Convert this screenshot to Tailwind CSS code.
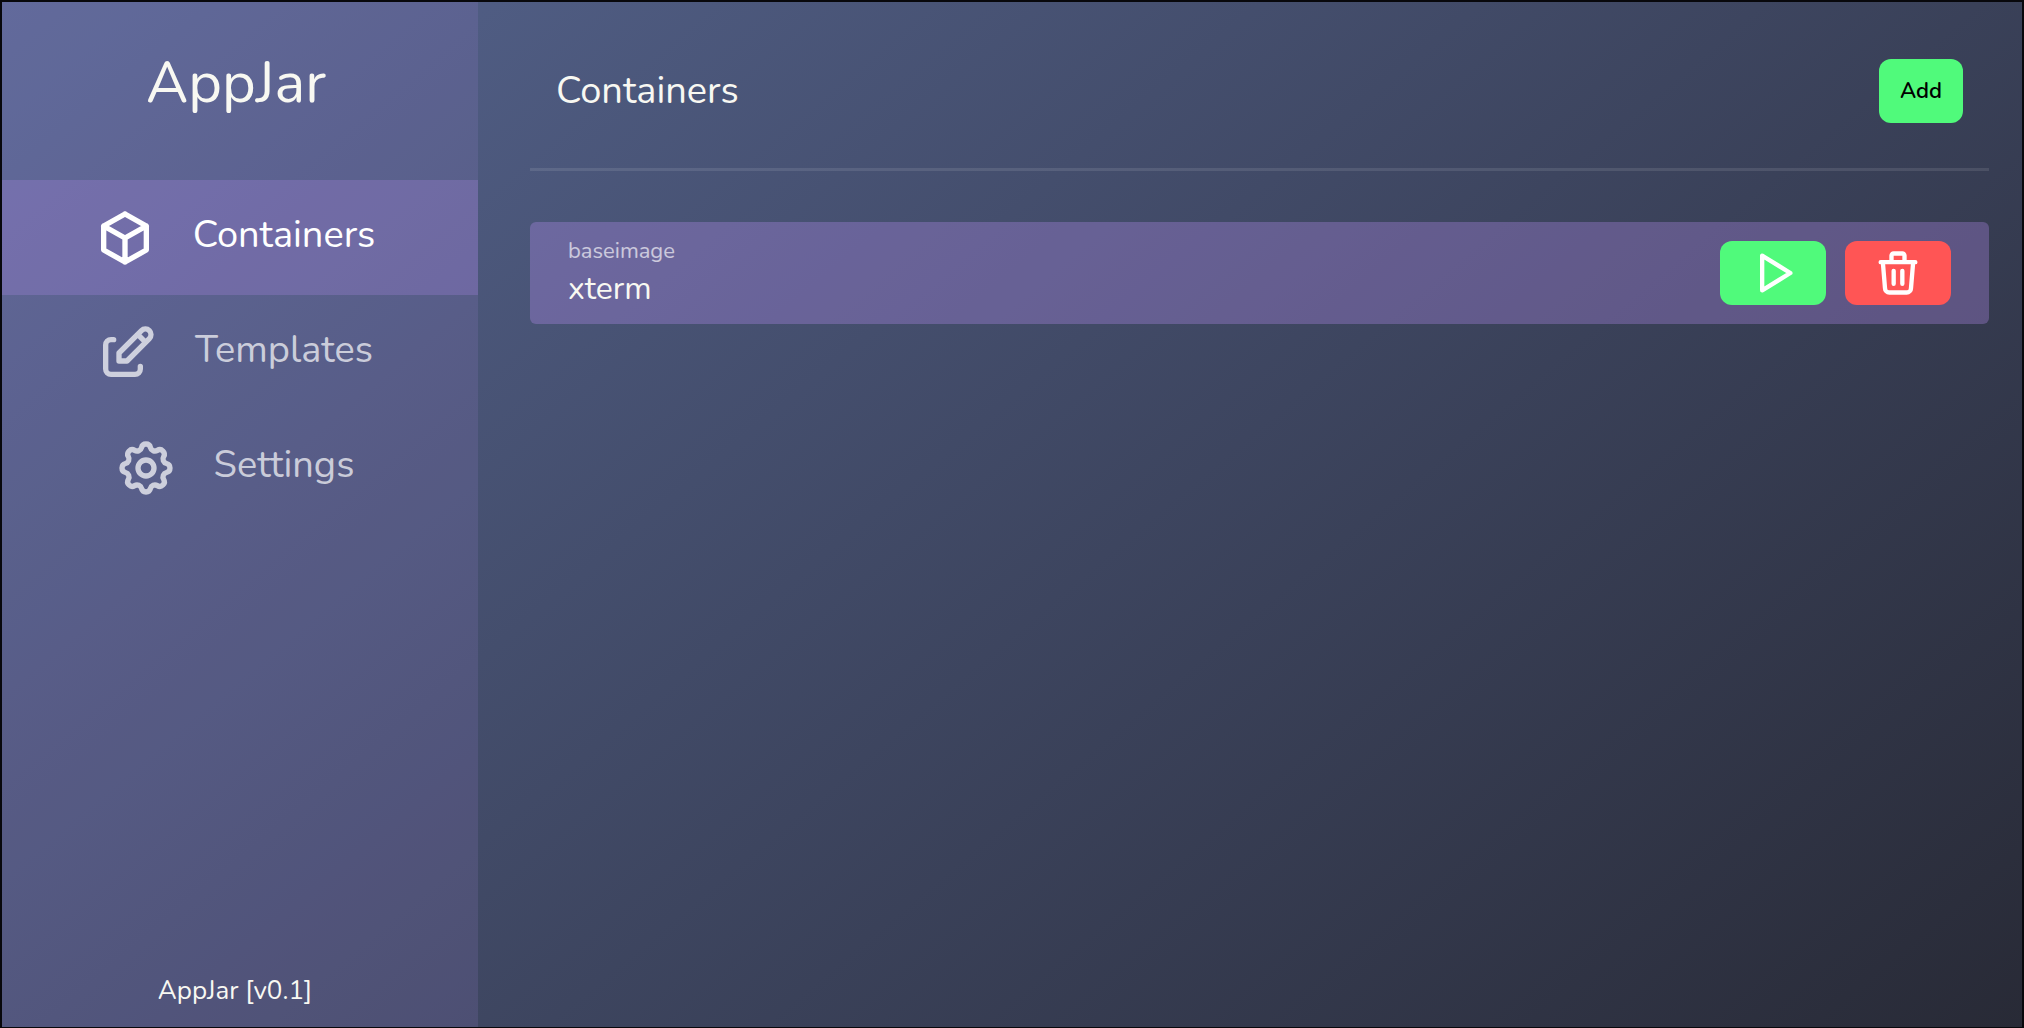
<!DOCTYPE html>
<html lang="en">
<head>
<meta charset="utf-8">
<meta name="viewport" content="width=device-width, initial-scale=1">
<title>AppJar</title>
<script src="https://cdn.jsdelivr.net/npm/@tailwindcss/browser@4"></script>
</head>
<body class="flex min-h-screen border-2 border-b border-[#08080c] bg-[linear-gradient(140deg,#566590,#282a36)] font-[Nunito,Lato,sans-serif] text-[#f8f8f2]">
  <aside class="flex w-[476px] shrink-0 flex-col bg-[#bd93f9]/12">
    <h1 class="pt-[45px] pr-2 pb-[61px] text-center text-[58px] leading-[72px]">AppJar</h1>
    <nav class="flex flex-col text-[38px] leading-[48px] text-white/70">
      <a href="#containers" aria-current="page" class="flex h-[115px] items-center justify-center gap-9 bg-[#bd93f9]/22 pr-3 text-white">
        <svg class="size-16" viewBox="0 0 24 24" fill="none" stroke="currentColor" stroke-width="2" stroke-linecap="round" stroke-linejoin="round" aria-hidden="true"><path d="M12 3l8 4.500v9L12 21l-8-4.500v-9L12 3M12 12l8-4.500M12 12v9M12 12L4 7.500"/></svg>
        <span class="pb-1.5">Containers</span>
      </a>
      <a href="#templates" class="flex h-[115px] items-center justify-center gap-9 pr-3">
        <svg class="size-16" viewBox="0 0 24 24" fill="none" stroke="currentColor" stroke-width="2" stroke-linecap="round" stroke-linejoin="round" aria-hidden="true"><path d="M7 7H6a2 2 0 0 0-2 2v9a2 2 0 0 0 2 2h9a2 2 0 0 0 2-2v-1M20.385 6.585a2.100 2.100 0 0 0-2.970-2.970L9 12v3h3l8.385-8.415zM16 5l3 3"/></svg>
        <span class="pb-1.5">Templates</span>
      </a>
      <a href="#settings" class="flex h-[115px] items-center justify-center gap-9 pr-3">
        <svg class="size-16" viewBox="0 0 24 24" fill="none" stroke="currentColor" stroke-width="2" stroke-linecap="round" stroke-linejoin="round" aria-hidden="true"><path d="M10.325 4.317c.426-1.756 2.924-1.756 3.350 0a1.724 1.724 0 0 0 2.573 1.066c1.543-.94 3.310.826 2.370 2.370a1.724 1.724 0 0 0 1.065 2.572c1.756.426 1.756 2.924 0 3.350a1.724 1.724 0 0 0-1.066 2.573c.94 1.543-.826 3.310-2.370 2.370a1.724 1.724 0 0 0-2.572 1.065c-.426 1.756-2.924 1.756-3.350 0a1.724 1.724 0 0 0-2.573-1.066c-1.543.94-3.310-.826-2.370-2.370a1.724 1.724 0 0 0-1.065-2.572c-1.756-.426-1.756-2.924 0-3.350a1.724 1.724 0 0 0 1.066-2.573c-.94-1.543.826-3.310 2.370-2.370.996.608 2.296.07 2.572-1.065z"/><circle cx="12" cy="12" r="3"/></svg>
        <span class="pb-1.5">Settings</span>
      </a>
    </nav>
    <p class="mt-auto pr-2.5 pb-5 text-center text-[26px] leading-8">AppJar [v0.1]</p>
  </aside>

  <main class="min-w-0 grow pr-[33px] pl-[52px]">
    <header class="flex items-center justify-between border-b-3 border-white/10 px-[26px] pt-[57px] pb-[45px]">
      <h2 class="text-[38px] leading-[48px]">Containers</h2>
      <button type="button" class="h-16 rounded-xl bg-[#50fa7b] px-[21px] text-[22px] font-semibold text-black">Add</button>
    </header>

    <article class="mt-[51px] flex h-[102px] items-center justify-between rounded-md bg-[#bd93f9]/30 px-[38px]">
      <div>
        <p class="text-[22px] leading-8 text-white/65">baseimage</p>
        <h3 class="text-[32px] leading-[44px]">xterm</h3>
      </div>
      <div class="flex gap-[19px]">
        <button type="button" aria-label="Start xterm" class="flex h-16 w-[106px] items-center justify-center rounded-xl bg-[#50fa7b] text-white">
          <svg class="size-13" viewBox="0 0 24 24" fill="none" stroke="currentColor" stroke-width="2" stroke-linecap="round" stroke-linejoin="round" aria-hidden="true"><path d="M7 4v16l13-8z"/></svg>
        </button>
        <button type="button" aria-label="Delete xterm" class="flex h-16 w-[106px] items-center justify-center rounded-xl bg-[#ff5555] text-white">
          <svg class="size-13" viewBox="0 0 24 24" fill="none" stroke="currentColor" stroke-width="2" stroke-linecap="round" stroke-linejoin="round" aria-hidden="true"><path d="M4 7h16M10 11v6M14 11v6M5 7l1 12a2 2 0 0 0 2 2h8a2 2 0 0 0 2-2l1-12M9 7V4a1 1 0 0 1 1-1h4a1 1 0 0 1 1 1v3"/></svg>
        </button>
      </div>
    </article>
  </main>
</body>
</html>
